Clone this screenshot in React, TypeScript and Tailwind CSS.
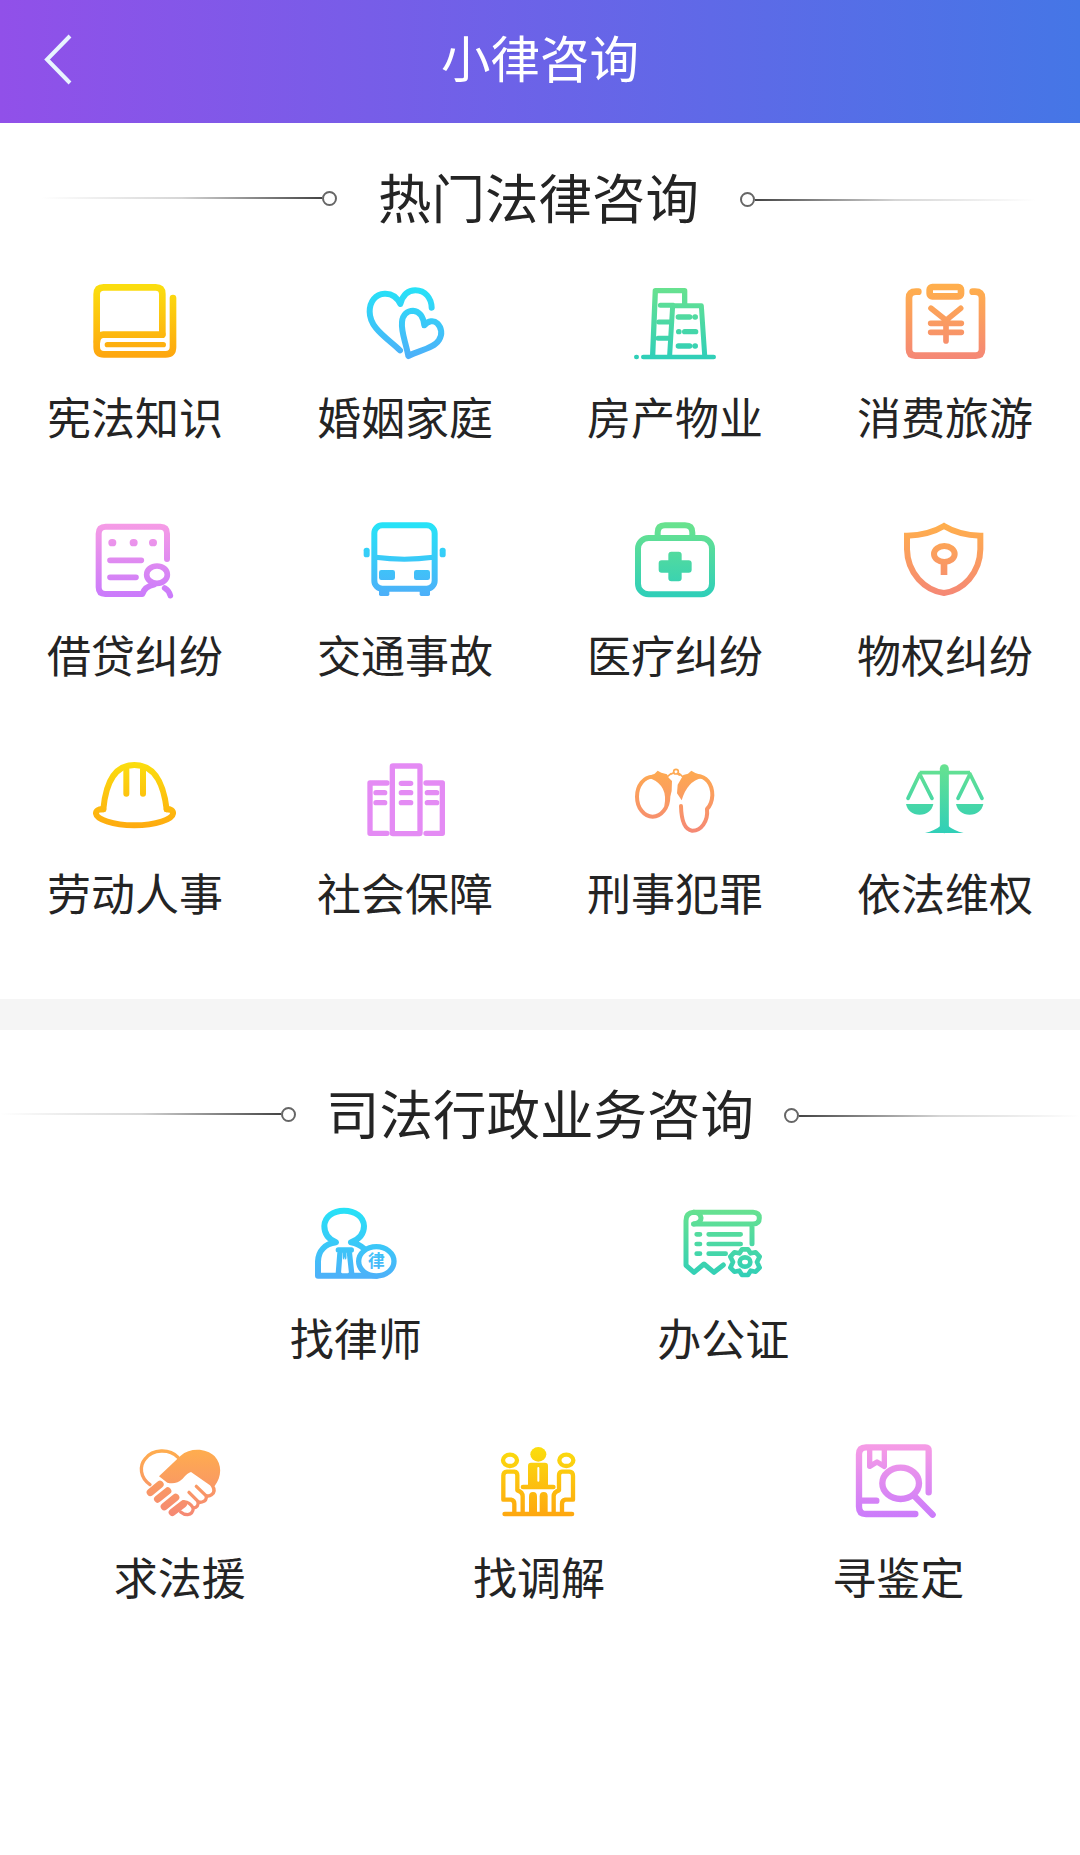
import React from 'react';

type Tone = 'yellow' | 'cyan' | 'green' | 'orange' | 'pink' | 'violet';

const TONES: Record<Tone, [string, string]> = {
  yellow: ['#fbdd0e', '#fea60f'],
  cyan: ['#27e2f7', '#4db0f9'],
  green: ['#68e28f', '#30cfb8'],
  orange: ['#ffae4d', '#f58875'],
  pink: ['#f59be6', '#cb7bfb'],
  violet: ['#e48bf4', '#e48bf4'],
};

interface IconProps {
  name: string;
  tone: Tone;
  x: number;
  y: number;
  width?: number;
  children: React.ReactNode;
}

function Icon({ name, tone, x, y, width = 18, children }: IconProps) {
  const [from, to] = TONES[tone];
  return (
    <svg
      className="w-[90px] h-[80px]"
      viewBox={`${x} ${y} 270 240`}
      fill="none"
      stroke={`url(#${name})`}
      strokeWidth={width}
      strokeLinecap="round"
      strokeLinejoin="round"
    >
      <defs>
        <linearGradient id={name} gradientUnits="userSpaceOnUse" x1={x} y1={y + 20} x2={x} y2={y + 228}>
          <stop offset="0" stopColor={from} />
          <stop offset="1" stopColor={to} />
        </linearGradient>
      </defs>
      {children}
    </svg>
  );
}

const BookIcon = () => (
  <Icon name="book" tone="yellow" x={30} y={33} width={20}>
    <path d="M247 192V72Q247 52 227 52H71Q50 52 50 73V231Q50 253 72 253H257Q279 253 279 231V84" />
    <path d="M247 194H70Q52 195 51 215" />
    <path d="M82 224H250" strokeWidth="16" />
  </Icon>
);

const HeartsIcon = () => (
  <Icon name="hearts" tone="cyan" x={840} y={33} width={18}>
    <path d="M1055 113C1054 84 1036 61 1006 61C983 61 968 76 961 102C950 79 935 70 914 71C886 72 869 95 869 125C869 173 917 201 960 241" />
    <path d="M985 258C977 215 963 188 966 156C968 133 983 122 999 122C1018 123 1030 140 1033 166C1045 151 1062 150 1072 160C1085 173 1088 193 1077 210C1062 235 1020 240 985 258Z" />
  </Icon>
);

const BuildingIcon = () => (
  <Icon name="building" tone="green" x={30} y={33} width={16}>
    <path d="M49 261H50M70 261H281" strokeWidth="14" />
    <path d="M98 255L106 62H194V102" />
    <path d="M149 255L158 107H244L254 255M121 106H160M116 156H150M114 205H148" strokeWidth="15" />
    <path d="M175 141H209M225 141H226M176 185H177M194 185H227M175 228H209M225 228H226" />
  </Icon>
);

const ClipboardIcon = () => (
  <Icon name="clipboard" tone="orange" x={840} y={33} width={20}>
    <path d="M895 65H888Q867 65 867 84V238Q867 257 886 257H1067Q1086 257 1086 238V84Q1086 65 1065 65H1058" />
    <rect x="929" y="51" width="94" height="28" rx="8" />
    <path d="M933 115L978 151L1022 115M932 160H1024M932 187H1024M978 152V213" strokeWidth="17" />
  </Icon>
);

const LoanIcon = () => (
  <Icon name="loan" tone="pink" x={30} y={27}>
    <path d="M261 147V71Q261 50 241 50H77Q56 50 56 71V232Q56 252 76 252H187Q195 229 222 224" />
    <ellipse cx="231" cy="194" rx="31" ry="26" strokeWidth="17" />
    <path d="M254 234Q267 241 271 257M90 151H184M90 202H168" strokeWidth="17" />
    <path d="M96 98H98M160 98H162M218 98H220" strokeWidth="22" />
  </Icon>
);

const BusIcon = () => (
  <Icon name="bus" tone="cyan" x={840} y={27}>
    <rect x="883" y="46" width="181" height="190" rx="24" />
    <path d="M886 142Q973 153 1060 142" strokeWidth="15" strokeLinecap="butt" />
    <g stroke="none" fill="url(#bus)">
      <rect x="897" y="180" width="48" height="30" rx="7" />
      <rect x="1002" y="180" width="48" height="30" rx="7" />
      <rect x="851" y="113" width="18" height="29" rx="8" />
      <rect x="1079" y="113" width="18" height="29" rx="8" />
      <rect x="897" y="238" width="31" height="20" rx="5" />
      <rect x="1019" y="238" width="31" height="20" rx="5" />
    </g>
  </Icon>
);

const MedkitIcon = () => (
  <Icon name="medkit" tone="green" x={30} y={27}>
    <rect x="54" y="84" width="222" height="169" rx="32" />
    <path d="M113 80V68Q113 46 135 46H195Q217 46 217 68V80" />
    <path d="M154 125H176Q185 125 185 134V151H206Q215 151 215 160V179Q215 188 206 188H185V205Q185 214 176 214H154Q145 214 145 205V188H125Q116 188 116 179V160Q116 151 125 151H145V134Q145 125 154 125Z" stroke="none" fill="url(#medkit)" />
  </Icon>
);

const ShieldIcon = () => (
  <Icon name="shield" tone="orange" x={840} y={27}>
    <path d="M972 48Q928 75 861 77V118C862 190 915 241 972 249C1029 241 1080 190 1081 118V77Q1016 75 972 48Z" strokeLinejoin="miter" />
    <ellipse cx="973" cy="132" rx="31" ry="24" />
    <path d="M972 156V195" strokeWidth="20" strokeLinecap="butt" />
  </Icon>
);

const HelmetIcon = () => (
  <Icon name="helmet" tone="yellow" x={30} y={21} width={18}>
    <path d="M70 178C76 112 97 45 163 45C231 45 252 112 260 178C273 177 280 182 279 191C277 207 230 226 163 226C97 226 50 207 48 191C47 182 55 177 70 178Z" />
    <path d="M70 178H64M260 178H266M139 58V131M189 58V131" />
  </Icon>
);

const SocialIcon = () => (
  <Icon name="social" tone="violet" x={840} y={21} width={16}>
    <rect x="937" y="48" width="83" height="203" rx="2" />
    <path d="M921 99H870V250H921M1038 99H1087V250H1038" />
    <path d="M888 128H914M888 158H914M964 100H992M964 128H992M964 158H992M1042 128H1070M1042 158H1070" />
  </Icon>
);

const HandcuffsIcon = () => (
  <Icon name="handcuffs" tone="orange" x={30} y={21} width={12}>
    <ellipse cx="98" cy="140" rx="47" ry="60" />
    <path d="M226 79C259 75 277 103 277 136C276 155 270 168 261 177C265 214 243 243 216 242C194 239 184 208 183 168" />
    <g stroke="none" fill="url(#handcuffs)">
      <path d="M90 77L104 71L113 62L124 68L141 73L146 83L156 93L155 123Q150 150 133 168Q145 108 94 86Z" />
      <path d="M185 151L171 130L173 104L183 87L190 75L204 71L214 62L226 69L242 74L246 84Q202 93 185 151Z" />
    </g>
    <g strokeWidth="5">
      <path d="M143 79L153 71M178 71L187 79" />
      <circle cx="168" cy="65" r="7" />
      <path d="M154 72L161 68M172 70L178 75" />
    </g>
  </Icon>
);

const ScalesIcon = () => (
  <Icon name="scales" tone="green" x={840} y={21} width={11}>
    <path d="M973 56V236" strokeWidth="27" />
    <path d="M899 68H1050" strokeLinecap="butt" />
    <path d="M864 145L899 72L936 145M1014 145L1050 72L1086 145" />
    <g stroke="none" fill="url(#scales)">
      <path d="M858 162H940C936 182 921 194 899 194C877 194 862 182 858 162Z" />
      <path d="M1008 162H1090C1086 182 1071 194 1049 194C1027 194 1012 182 1008 162Z" />
      <path d="M915 249Q945 242 960 229H986Q1001 242 1031 249Z" />
    </g>
  </Icon>
);

const LawyerIcon = () => (
  <Icon name="lawyer" tone="cyan" x={33} y={36} width={18}>
    <path d="M230 257H54V214C55 184 74 162 108 157C84 147 73 128 73 108C74 80 99 62 132 62C165 62 191 80 192 108C192 130 180 147 153 157Q176 161 192 176" />
    <path d="M115 180H154M120 186L115 250M148 186L155 250" strokeWidth="16" />
    <path d="M134 186V204" strokeWidth="11" />
    <path d="M134 200L126 250H144Z" fill="#fff" stroke="none" />
    <ellipse cx="229" cy="214" rx="53" ry="44" strokeWidth="16" fill="#fff" />
    <text
      x="229"
      y="232"
      textAnchor="middle"
      stroke="none"
      fill="url(#lawyer)"
      className="font-['Noto_Sans_CJK_SC',sans-serif] text-[50px] font-bold"
    >
      律
    </text>
  </Icon>
);

const NotaryIcon = () => (
  <Icon name="notary" tone="green" x={1137} y={36} width={15}>
    <path d="M1184 102Q1207 99 1206 83Q1203 67 1184 67Q1161 69 1161 92V226L1185 247L1215 222L1245 247L1273 225" />
    <path d="M1184 67H1362Q1381 68 1381 84Q1381 102 1362 102H1184M1359 104V161" />
    <path d="M1193 133H1203M1229 133H1325M1193 162H1203M1229 162H1325M1193 191H1203M1229 191H1280" strokeWidth="14" />
    <path
      d="M1329 178H1347L1355 190L1370 187L1382 200L1374 216L1382 233L1370 245L1355 242L1347 255H1329L1321 242L1306 245L1294 233L1302 216L1294 200L1306 187L1321 190Z"
      strokeWidth="14"
    />
    <ellipse cx="1338" cy="216" rx="16" ry="14" strokeWidth="14" />
  </Icon>
);

const HandshakeIcon = () => (
  <Icon name="handshake" tone="orange" x={45} y={33} width={10}>
    <path d="M90 164C60 143 57 108 76 86C98 57 148 55 174 82" />
    <path
      d="M117 139L182 77C209 53 258 53 284 79C306 103 306 140 284 168L272 167L213 126Q203 128 188 146Q168 165 142 158Z"
      stroke="none"
      fill="url(#handshake)"
    />
    <path d="M120 163L91 187M143 183L113 207M167 202L133 230M190 222L157 247" strokeWidth="22" />
    <path d="M276 165Q289 184 275 194Q267 200 259 197Q261 212 246 216Q240 218 234 215Q237 231 220 234Q219 252 203 254Q191 254 182 246" />
    <path d="M229 169L257 196M207 187L234 214M190 216Q206 213 219 233" />
  </Icon>
);

const MediatePerson = () => (
  <>
    <ellipse cx="93" cy="91" rx="21" ry="17" />
    <path d="M84 125H106Q115 126 115 136V181Q131 186 131 199V246M84 125Q73 126 73 137V209H96Q106 211 106 221V246" />
  </>
);

const MediateIcon = () => (
  <Icon name="mediate" tone="yellow" x={45} y={33} width={13}>
    <MediatePerson />
    <g transform="translate(355 0) scale(-1 1)">
      <MediatePerson />
    </g>
    <g stroke="none" fill="url(#mediate)">
      <ellipse cx="178" cy="73" rx="24" ry="22" />
      <path d="M156 98H198Q207 98 207 107V167H147V107Q147 98 156 98Z" />
      <path d="M150 250V199Q150 186 162 186Q174 186 174 199V250Z" />
      <path d="M182 250V199Q182 186 194 186Q206 186 206 199V250Z" />
    </g>
    <path d="M178 114V152" stroke="#fff" strokeWidth="6" />
    <path d="M132 171H223M77 252H279" strokeWidth="14" />
  </Icon>
);

const AppraiseIcon = () => (
  <Icon name="appraise" tone="pink" x={45} y={33} width={19}>
    <path d="M272 187V62Q272 52 262 52H84Q63 52 63 73V230Q63 252 84 252H232M68 212H115" />
    <path d="M95 58V109L117 96L139 109V58" strokeWidth="16" />
    <ellipse cx="188" cy="160" rx="55" ry="47" />
    <path d="M229 198L284 254" />
  </Icon>
);

interface Topic {
  label: string;
  icon: React.ComponentType;
}

const HOT_TOPICS: Topic[] = [
  { label: '宪法知识', icon: BookIcon },
  { label: '婚姻家庭', icon: HeartsIcon },
  { label: '房产物业', icon: BuildingIcon },
  { label: '消费旅游', icon: ClipboardIcon },
  { label: '借贷纠纷', icon: LoanIcon },
  { label: '交通事故', icon: BusIcon },
  { label: '医疗纠纷', icon: MedkitIcon },
  { label: '物权纠纷', icon: ShieldIcon },
  { label: '劳动人事', icon: HelmetIcon },
  { label: '社会保障', icon: SocialIcon },
  { label: '刑事犯罪', icon: HandcuffsIcon },
  { label: '依法维权', icon: ScalesIcon },
];

const SERVICES_TOP: Topic[] = [
  { label: '找律师', icon: LawyerIcon },
  { label: '办公证', icon: NotaryIcon },
];

const SERVICES_BOTTOM: Topic[] = [
  { label: '求法援', icon: HandshakeIcon },
  { label: '找调解', icon: MediateIcon },
  { label: '寻鉴定', icon: AppraiseIcon },
];

function TopicButton({ label, icon: TopicIcon }: Topic) {
  return (
    <button className="flex flex-col items-center">
      <TopicIcon />
      <span className="mt-[23px] text-[44px] leading-[64px] whitespace-nowrap">{label}</span>
    </button>
  );
}

function SectionTitle({ title, gap }: { title: string; gap: string }) {
  return (
    <div className={`flex items-center justify-center h-20 ${gap}`}>
      <div className="flex items-center">
        <span className="w-[281px] h-[2px] bg-gradient-to-r from-transparent via-[#22222230] to-[#444]"></span>
        <span className="w-[15px] h-[15px] rounded-full border-2 border-[#666]"></span>
      </div>
      <h2 className="pb-[5px] text-[53.5px] leading-[80px] whitespace-nowrap">{title}</h2>
      <div className="flex items-center pt-[3px]">
        <span className="w-[15px] h-[15px] rounded-full border-2 border-[#666]"></span>
        <span className="w-[281px] h-[2px] bg-gradient-to-r from-[#444] via-[#22222230] to-transparent"></span>
      </div>
    </div>
  );
}

export default function App() {
  return (
    <div className="w-[1080px] h-[1855px] bg-white overflow-hidden text-[#242424] font-['Noto_Sans_CJK_SC',sans-serif]">
      {/* Header */}
      <header className="flex items-center h-[123px] px-[43px] bg-linear-[to_right,#9150e9,#4576e6] text-white">
        <button className="w-[30px] pb-[3px]">
          <svg className="w-[30px] h-[52px]" viewBox="0 0 30 52" fill="none" stroke="#e8f4ff" strokeWidth="4">
            <path d="M27 2L4 25.500L27 49" />
          </svg>
        </button>
        <h1 className="flex-1 pr-[30px] text-center text-[49.5px] leading-[72px] pb-[10px]">小律咨询</h1>
      </header>

      {/* Hot topics */}
      <section className="h-[876px] pt-[35px]">
        <div className="pr-[3px]">
          <SectionTitle title="热门法律咨询" gap="gap-[41px]" />
        </div>
        <div className="grid grid-cols-4 gap-y-[71px] mt-[43px]">
          {HOT_TOPICS.map((topic) => (
            <TopicButton key={topic.label} {...topic} />
          ))}
        </div>
      </section>

      <div className="h-[31px] bg-[#f5f5f5]"></div>

      {/* Judicial services */}
      <section className="pt-[44px]">
        <SectionTitle title="司法行政业务咨询" gap="gap-[30px]" />
        <div className="grid grid-cols-2 pl-[172px] pr-[173px] mt-[48px]">
          {SERVICES_TOP.map((topic) => (
            <TopicButton key={topic.label} {...topic} />
          ))}
        </div>
        <div className="grid grid-cols-3 pr-[2px] mt-[72px]">
          {SERVICES_BOTTOM.map((topic) => (
            <TopicButton key={topic.label} {...topic} />
          ))}
        </div>
      </section>
    </div>
  );
}
